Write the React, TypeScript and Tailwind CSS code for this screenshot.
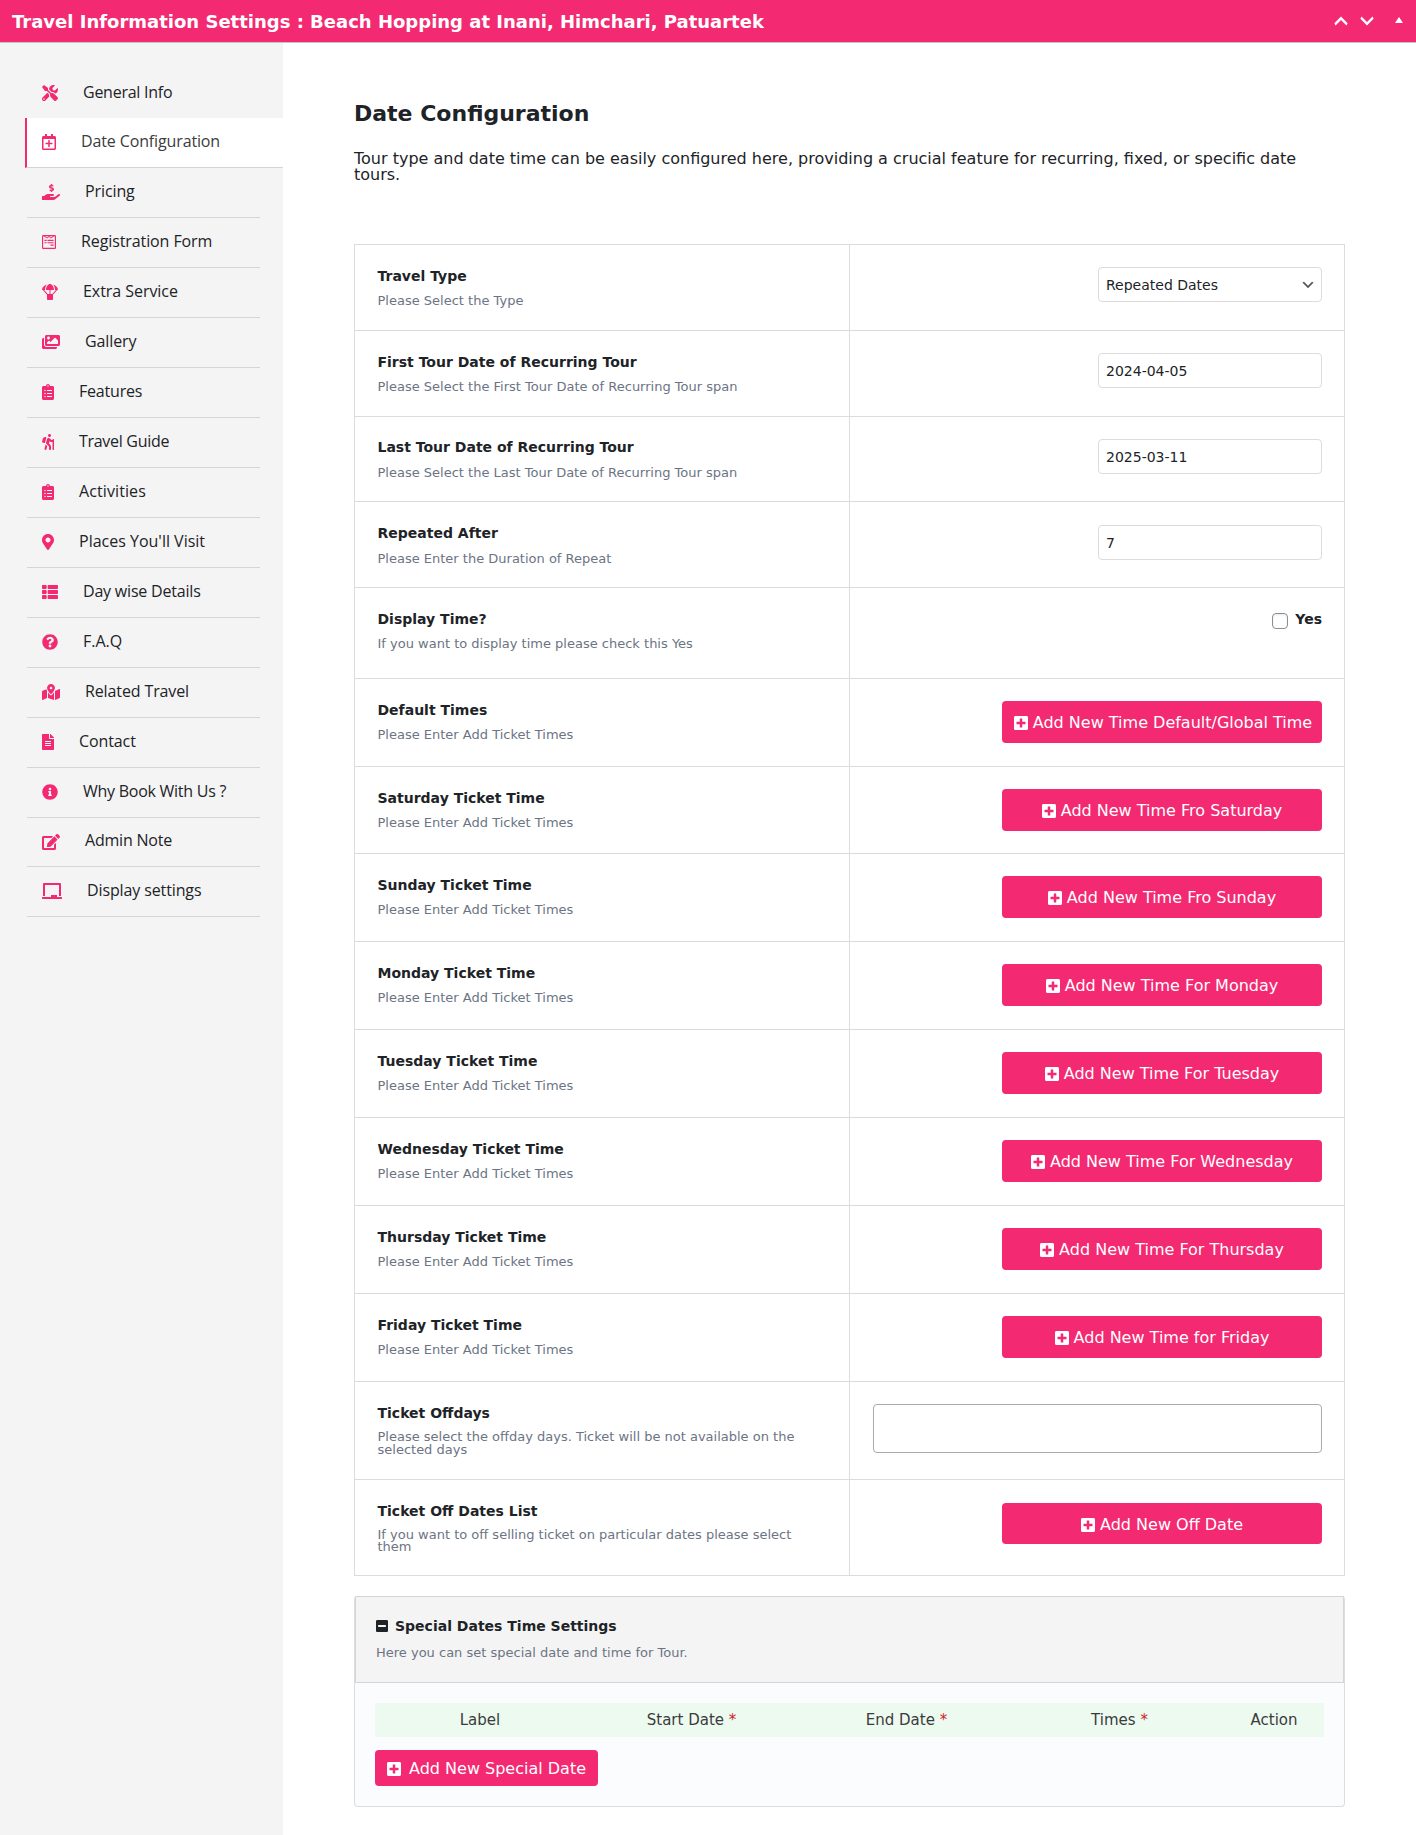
import React from "react";
import type { IconType } from "react-icons";
import {
  FaTools, FaRegCalendarPlus, FaHandHoldingUsd, FaWpforms, FaParachuteBox, FaImages, FaClipboardList, FaHiking,
  FaMapMarkerAlt, FaThList, FaQuestionCircle, FaMapMarkedAlt, FaFileAlt, FaInfoCircle, FaEdit, FaChalkboard,
  FaPlusSquare, FaMinusSquare,
} from "react-icons/fa";

type NavItem = { label: string; icon: IconType; size: string; row?: string; tracking?: string; active?: boolean };

const nav: NavItem[] = [
  { label: "General Info", icon: FaTools, size: "w-4", tracking: "tracking-[-0.25px]" },
  { label: "Date Configuration", icon: FaRegCalendarPlus, size: "w-3.5", tracking: "tracking-[-0.13px]", active: true },
  { label: "Pricing", icon: FaHandHoldingUsd, size: "w-[18px]", tracking: "tracking-[-0.1px]" },
  { label: "Registration Form", icon: FaWpforms, size: "w-3.5", tracking: "tracking-[-0.1px]" },
  { label: "Extra Service", icon: FaParachuteBox, size: "w-4", tracking: "tracking-[-0.05px]" },
  { label: "Gallery", icon: FaImages, size: "w-[18px]", tracking: "tracking-[-0.1px]" },
  { label: "Features", icon: FaClipboardList, size: "w-3", tracking: "tracking-[-0.2px]" },
  { label: "Travel Guide", icon: FaHiking, size: "w-3", tracking: "tracking-[-0.3px]" },
  { label: "Activities", icon: FaClipboardList, size: "w-3", tracking: "tracking-[0.1px]" },
  { label: "Places You'll Visit", icon: FaMapMarkerAlt, size: "w-3" },
  { label: "Day wise Details", icon: FaThList, size: "w-4", tracking: "tracking-[-0.2px]" },
  { label: "F.A.Q", icon: FaQuestionCircle, size: "w-4" },
  { label: "Related Travel", icon: FaMapMarkedAlt, size: "w-[18px]", tracking: "tracking-[-0.12px]" },
  { label: "Contact", icon: FaFileAlt, size: "w-3", tracking: "tracking-[-0.1px]" },
  { label: "Why Book With Us ?", icon: FaInfoCircle, size: "w-4", tracking: "tracking-[-0.26px]" },
  { label: "Admin Note", icon: FaEdit, size: "w-[18px]", row: "h-[49px]", tracking: "tracking-[-0.2px]" },
  { label: "Display settings", icon: FaChalkboard, size: "w-5", tracking: "tracking-[-0.12px]" },
];

function AddButton({ label, size = "-mt-px h-[42px] pt-px" }: { label: string; size?: string }) {
  return (
    <button className={`flex w-[320px] ${size} items-center justify-center rounded bg-[#f32971] text-base whitespace-nowrap text-white`}>
      <FaPlusSquare className="mr-[5px] h-4 w-3.5 shrink-0" />
      {label}
    </button>
  );
}

function Field({ value, select, offset = "-mt-px" }: { value: string; select?: boolean; offset?: string }) {
  return (
    <div className={`flex h-[35px] w-[224px] ${offset} items-center justify-between rounded border border-[#dcdcde] bg-white pr-[5px] pl-[7px] text-sm text-[#1d2327]`}>
      <span>{value}</span>
      {select && (
        <svg className="mt-px h-4 w-4" viewBox="0 0 20 20" fill="#555">
          <path d="M5 6l5 5 5-5 2 1-7 7-7-7 2-1z" />
        </svg>
      )}
    </div>
  );
}

type RowProps = {
  title: string;
  hint: string;
  size: string;
  top?: string;
  hintClass?: string;
  children: React.ReactNode;
};

function Row({ title, hint, size, top = "pt-[22px]", hintClass = "mt-[9px] leading-[13px]", children }: RowProps) {
  return (
    <div className={`flex ${size} border-b border-[#dcdcdc]`}>
      <div className={`w-[495px] border-r border-[#dcdcdc] ${top} pr-10 pl-[22.5px]`}>
        <div className="text-sm leading-[18px] font-bold">{title}</div>
        <div className={`text-[13px] text-[#6c7484] ${hintClass}`}>{hint}</div>
      </div>
      <div className="flex flex-1 items-start justify-end pt-[23px] pr-[22px]">{children}</div>
    </div>
  );
}

const timeRows = [
  ["Default Times", "Add New Time Default/Global Time"],
  ["Saturday Ticket Time", "Add New Time Fro Saturday"],
  ["Sunday Ticket Time", "Add New Time Fro Sunday"],
  ["Monday Ticket Time", "Add New Time For Monday"],
  ["Tuesday Ticket Time", "Add New Time For Tuesday"],
  ["Wednesday Ticket Time", "Add New Time For Wednesday"],
  ["Thursday Ticket Time", "Add New Time For Thursday"],
  ["Friday Ticket Time", "Add New Time for Friday"],
];

export default function App() {
  return (
    <div className="flex h-[1835px] w-[1416px] flex-col bg-white font-['DejaVu_Sans',sans-serif] text-[#1d2327]">
      <header className="flex h-[43px] items-center justify-between border-b border-[#c3c4c7] bg-[#f32971] pr-[13px] pl-3 text-white">
        <h1 className="pt-0.5 text-lg font-bold">Travel Information Settings : Beach Hopping at Inani, Himchari, Patuartek</h1>
        <div className="flex items-center">
          <svg className="h-[22px] w-[22px]" viewBox="0 0 20 20" fill="currentColor"><path d="M15 14l-5-5-5 5-1-2 6-6 6 6z" /></svg>
          <svg className="ml-1 h-[22px] w-[22px]" viewBox="0 0 20 20" fill="currentColor"><path d="M5 6l5 5 5-5 1 2-6 6-6-6z" /></svg>
          <svg className="mb-0.5 ml-[17px] h-1.5 w-2" viewBox="0 0 8 6" fill="currentColor"><path d="M4 0L8 6H0z" /></svg>
        </div>
      </header>

      <div className="flex flex-1">
        <nav className="w-[283px] bg-[#f4f4f4] pt-[25px] pl-[25px] font-['Open_Sans',sans-serif] text-base">
          {nav.map(({ label, icon: Icon, size, row = "h-[50px]", tracking = "tracking-normal", active }, i) => (
            <div
              key={label}
              className={`flex ${row} items-center gap-[25px] border-b ${
                active
                  ? "border-l-2 border-b-[#d5d5d5] border-l-[#f32971] bg-white pb-px pl-[15px] text-[#3c3c3c]"
                  : i === 0
                    ? "ml-0.5 w-[233px] border-transparent pl-[15px]"
                    : "ml-0.5 w-[233px] border-[#d5d5d5] pb-px pl-[15px]"
              }`}
            >
              <Icon className={`h-4 ${size} shrink-0 text-[#f32971]`} />
              <span className={`${i === 0 ? "pb-px" : "pb-[3px]"} whitespace-nowrap ${tracking}`}>{label}</span>
            </div>
          ))}
        </nav>

        <main className="flex-1 pt-[57px] pl-[71px]">
          <h2 className="text-[22px] leading-7 font-bold">Date Configuration</h2>
          <p className="mt-[23px] h-8 w-[990px] pr-8 text-base leading-4">
            Tour type and date time can be easily configured here, providing a crucial feature for recurring, fixed, or
            specific date tours.
          </p>

          <section className="mt-[61px] w-[991px] border border-b-0 border-[#dcdcdc]">
            <Row title="Travel Type" hint="Please Select the Type" size="h-[86px]">
              <Field value="Repeated Dates" select />
            </Row>
            <Row title="First Tour Date of Recurring Tour" hint="Please Select the First Tour Date of Recurring Tour span" size="h-[86px]">
              <Field value="2024-04-05" />
            </Row>
            <Row
              title="Last Tour Date of Recurring Tour"
              hint="Please Select the Last Tour Date of Recurring Tour span"
              size="h-[85px]"
              top="pt-[21px]"
              hintClass="mt-2.5 leading-[13px]"
            >
              <Field value="2025-03-11" />
            </Row>
            <Row title="Repeated After" hint="Please Enter the Duration of Repeat" size="h-[86px]" hintClass="mt-2.5 leading-[13px]">
              <Field value="7" offset="mt-0" />
            </Row>
            <Row title="Display Time?" hint="If you want to display time please check this Yes" size="h-[91px]">
              <div className="-mt-px flex gap-[7px] text-sm leading-[18px] font-bold">
                <span className="mt-[3px] h-4 w-4 rounded border border-[#8c8f94] bg-white shadow-[inset_0_1px_2px_rgba(0,0,0,0.1)]" />
                Yes
              </div>
            </Row>
            {timeRows.map(([title, button], i) => (
              <Row key={title} title={title} hint="Please Enter Add Ticket Times" size={i === 1 ? "h-[87px]" : "h-[88px]"}>
                <AddButton label={button} size={i === 0 ? "-mt-px h-[42px] pt-px pl-0.5" : "-mt-px h-[42px] pt-px"} />
              </Row>
            ))}
            <Row
              title="Ticket Offdays"
              hint="Please select the offday days. Ticket will be not available on the selected days"
              size="h-[98px]"
              hintClass="mt-2 leading-[13px]"
            >
              <div className="-mt-px h-[49px] w-[449px] rounded border border-[#aaaaaa] bg-white" />
            </Row>
            <Row
              title="Ticket Off Dates List"
              hint="If you want to off selling ticket on particular dates please select them"
              size="h-[96px]"
              hintClass="mt-[9px] leading-3"
            >
              <AddButton label="Add New Off Date" size="h-[41px] pt-0.5" />
            </Row>
          </section>

          <section className="mt-5 h-[211px] w-[991px] rounded border border-t-0 border-[#dcdcde] bg-[#fbfcfe]">
            <div className="h-[87px] border border-[#d5d5d5] bg-[#f4f4f4] pt-5 pl-5">
              <div className="flex items-center gap-[7px] text-sm leading-[18px] font-bold">
                <FaMinusSquare className="h-3.5 w-3" />
                Special Dates Time Settings
              </div>
              <div className="mt-[11px] text-[13px] leading-[13px] text-[#6c7484]">Here you can set special date and time for Tour.</div>
            </div>
            <div className="mt-5 ml-5 grid h-[34px] w-[949px] grid-cols-[210px_213px_217px_209px_100px] items-center justify-items-center bg-[#ecfaef] text-[15px] text-[#3c3c3c]">
              <span>Label</span>
              <span>Start Date <span className="text-[#d01f1f]">*</span></span>
              <span>End Date <span className="text-[#d01f1f]">*</span></span>
              <span>Times <span className="text-[#d01f1f]">*</span></span>
              <span>Action</span>
            </div>
            <button className="mt-[13px] ml-5 flex h-9 w-[223px] items-center gap-2 rounded bg-[#f32971] pt-px pl-3 text-base whitespace-nowrap text-white">
              <FaPlusSquare className="h-4 w-3.5 shrink-0" />
              Add New Special Date
            </button>
          </section>
        </main>
      </div>
    </div>
  );
}
